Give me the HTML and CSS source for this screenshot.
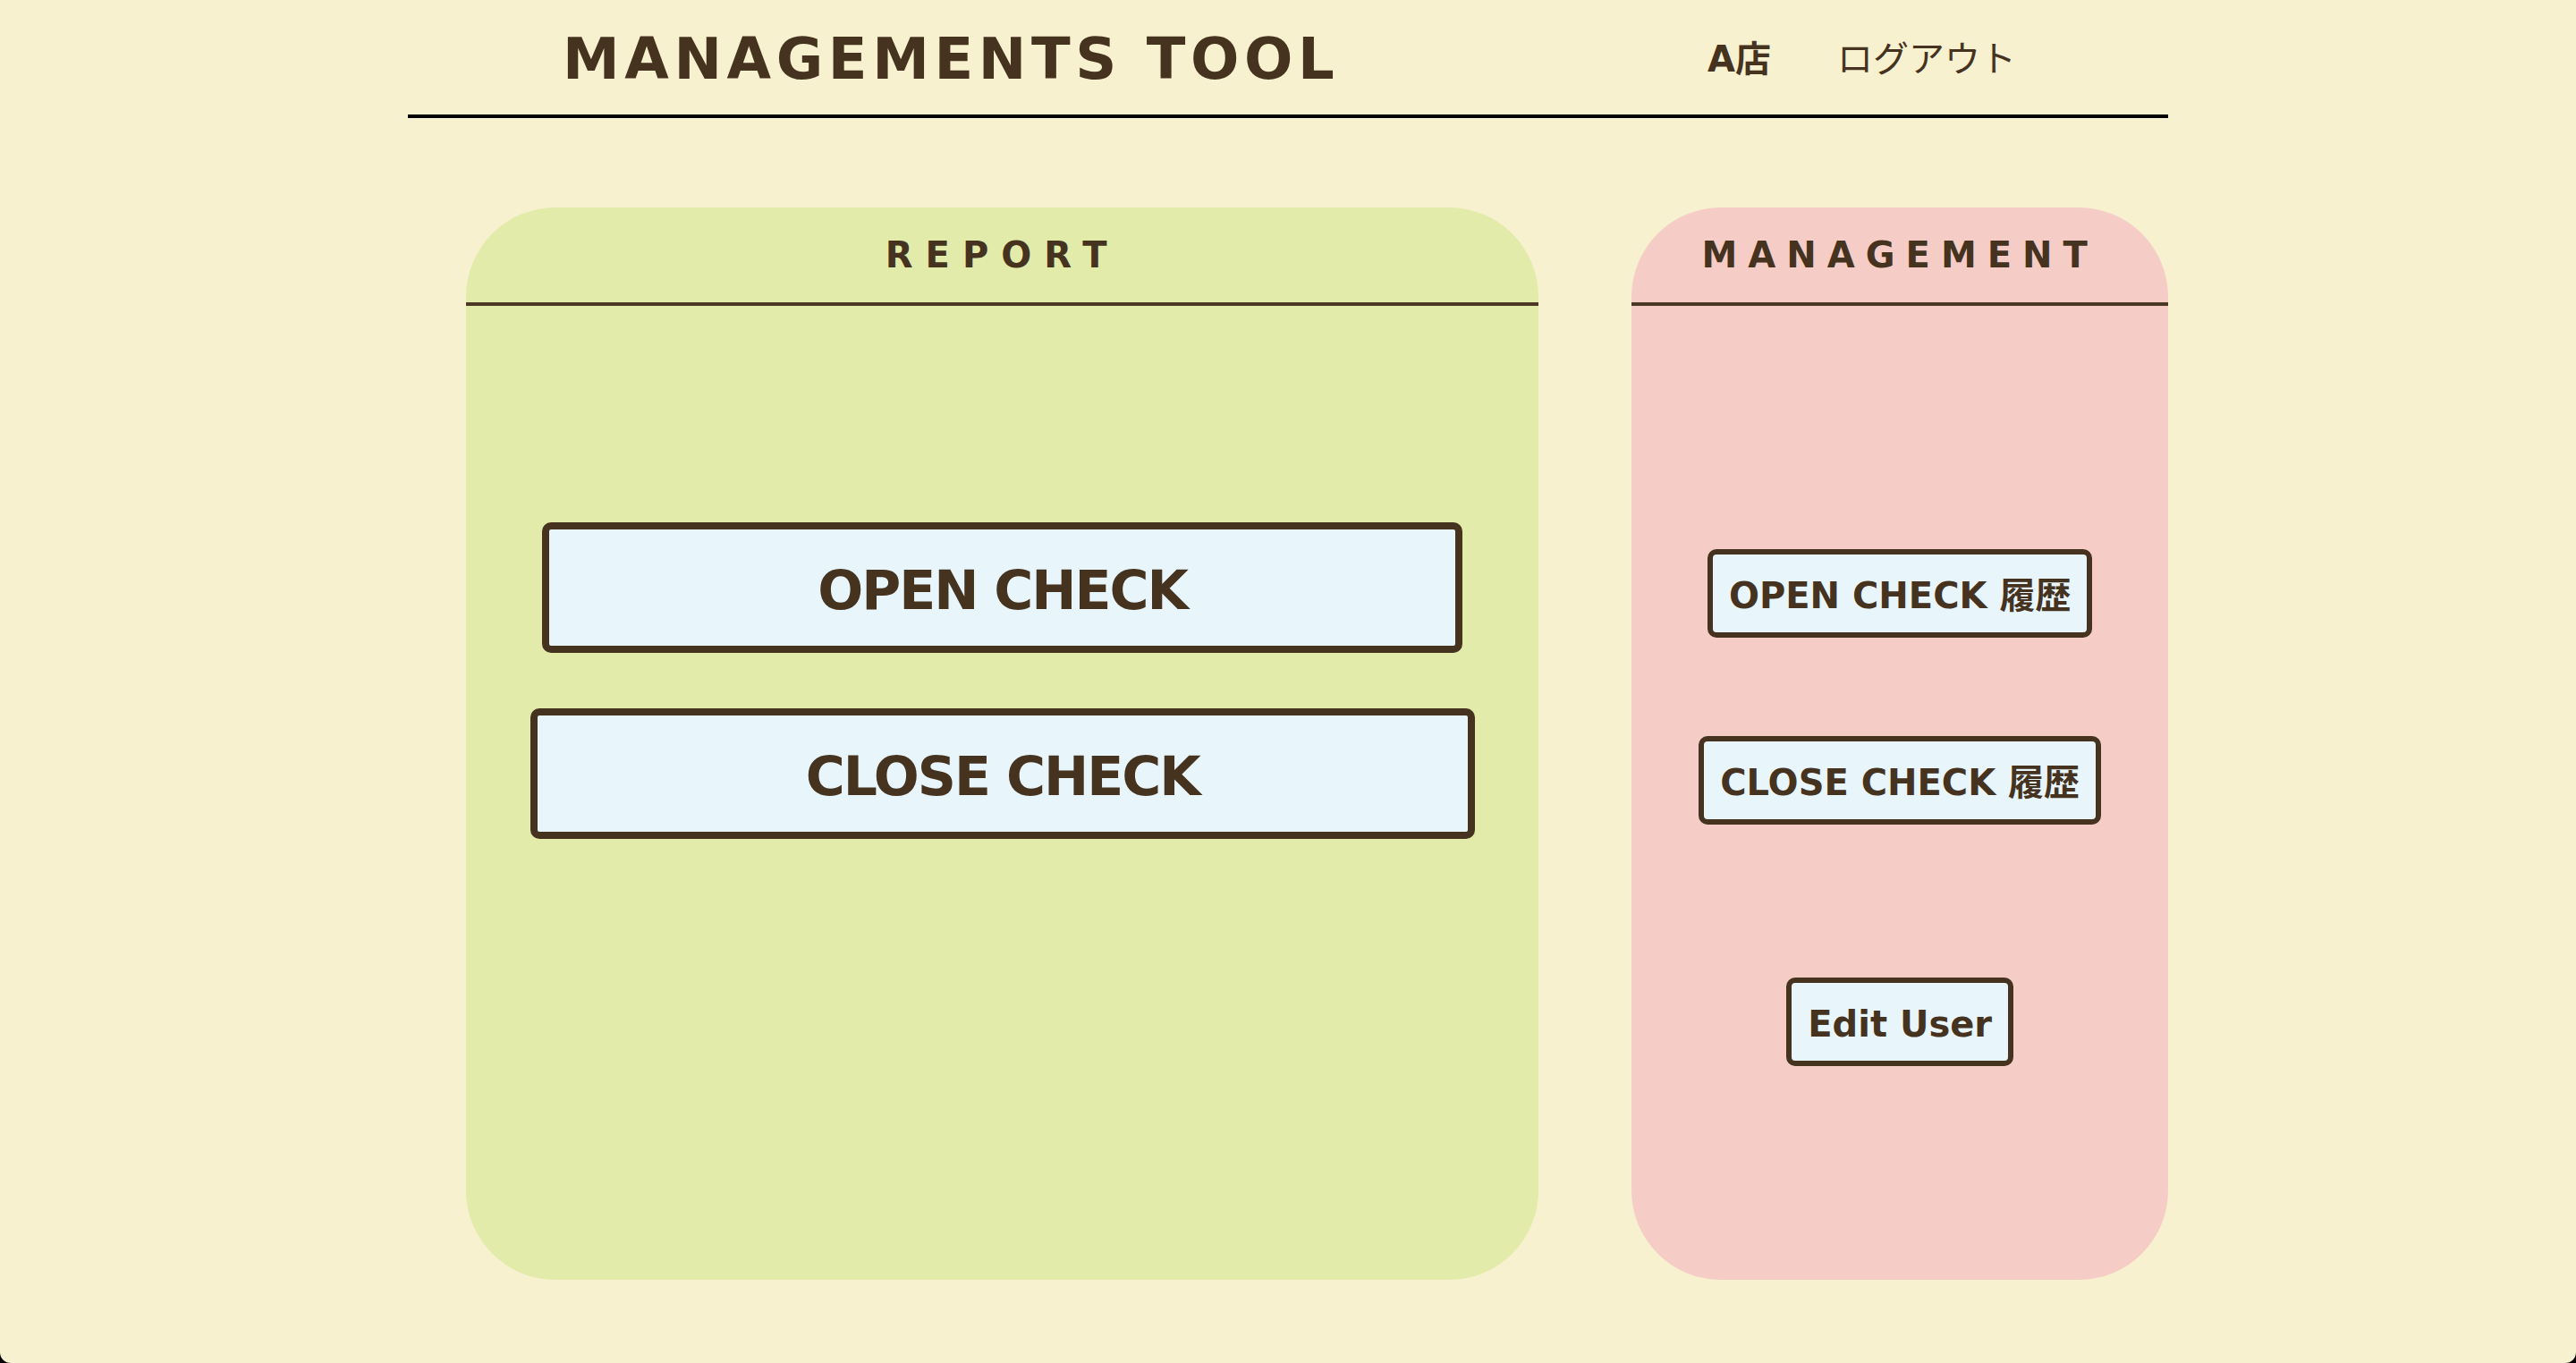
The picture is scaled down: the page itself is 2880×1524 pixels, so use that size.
FILE: index.html
```html
<!DOCTYPE html>
<html lang="ja">
<head>
<meta charset="utf-8">
<title>MANAGEMENTS TOOL</title>
<link rel="stylesheet" href="styles.css">
</head>
<body>
<div class="wrap">
  <header class="header">
    <h1 class="title">MANAGEMENTS TOOL</h1>
    <nav class="nav">
      <span class="store">A店</span>
      <a class="logout" href="#">ログアウト</a>
    </nav>
  </header>
  <main class="panels">
    <section class="panel report">
      <h2 class="panel-head">REPORT</h2>
      <div class="panel-body report-body">
        <button class="btn btn-lg">OPEN CHECK</button>
        <button class="btn btn-lg">CLOSE CHECK</button>
      </div>
    </section>
    <section class="panel mgmt">
      <h2 class="panel-head mgmt-head">MANAGEMENT</h2>
      <div class="panel-body mgmt-body">
        <button class="btn btn-sm">OPEN CHECK 履歴</button>
        <button class="btn btn-sm second">CLOSE CHECK 履歴</button>
        <button class="btn btn-sm third">Edit User</button>
      </div>
    </section>
  </main>
</div>
</body>
</html>
```

FILE: styles.css
```css
html {
  background: #000;
}
body {
  margin: 0;
  height: 1524px;
  background: #f7f1d0;
  border-radius: 0 0 12px 12px;
  overflow: hidden;
  color: #45331f;
  font-family: "DejaVu Sans", "Noto Sans CJK JP", sans-serif;
}
.wrap {
  width: 1968px;
  margin: 0 auto;
}
.header {
  height: 124px;
  padding: 4px 170px 0 173px;
  display: flex;
  align-items: center;
  justify-content: space-between;
  border-bottom: 4px solid #000;
}
.title {
  margin: 0;
  font-size: 64px;
  font-weight: bold;
  letter-spacing: 5.6px;
}
.nav {
  display: flex;
  align-items: center;
  gap: 74px;
  margin-top: -6px;
}
.store {
  font-size: 40px;
  font-weight: bold;
  font-family: "DejaVu Sans", "Noto Sans CJK JP", sans-serif;
}
.logout {
  font-size: 40px;
  color: #45331f;
  text-decoration: none;
  font-family: "Noto Sans CJK JP", sans-serif;
}
.panels {
  display: flex;
  gap: 104px;
  padding-left: 65px;
  margin-top: 100px;
}
.panel {
  height: 1199px;
  border-radius: 100px;
  display: flex;
  flex-direction: column;
}
.report {
  width: 1200px;
  background: #e2ebaa;
}
.mgmt {
  width: 600px;
  background: #f5cdc6;
}
.panel-head {
  margin: 0;
  height: 106px;
  display: flex;
  align-items: center;
  justify-content: center;
  border-bottom: 4px solid #4b3826;
  font-size: 40px;
  font-weight: bold;
  letter-spacing: 14px;
}
.mgmt-head {
  letter-spacing: 12px;
}
.panel-body {
  display: flex;
  flex-direction: column;
  align-items: center;
}
.report-body {
  padding-top: 242px;
  gap: 62px;
}
.mgmt-body {
  padding-top: 272px;
}
.btn {
  background: #e8f6fc;
  color: #45331f;
  border-style: solid;
  border-color: #45331f;
  font-family: "DejaVu Sans", "Noto Sans CJK JP", sans-serif;
  font-weight: bold;
  cursor: pointer;
  margin: 0;
}
.btn-lg {
  border-width: 8px;
  border-radius: 10px;
  font-size: 60px;
  line-height: 70px;
  letter-spacing: -2px;
  padding: 33px 300px 27px;
}
.btn-sm {
  border-width: 6px;
  border-radius: 10px;
  font-size: 40px;
  line-height: 47px;
  padding: 23px 18px 17px;
}
.second {
  margin-top: 110px;
}
.third {
  margin-top: 171px;
}
```
